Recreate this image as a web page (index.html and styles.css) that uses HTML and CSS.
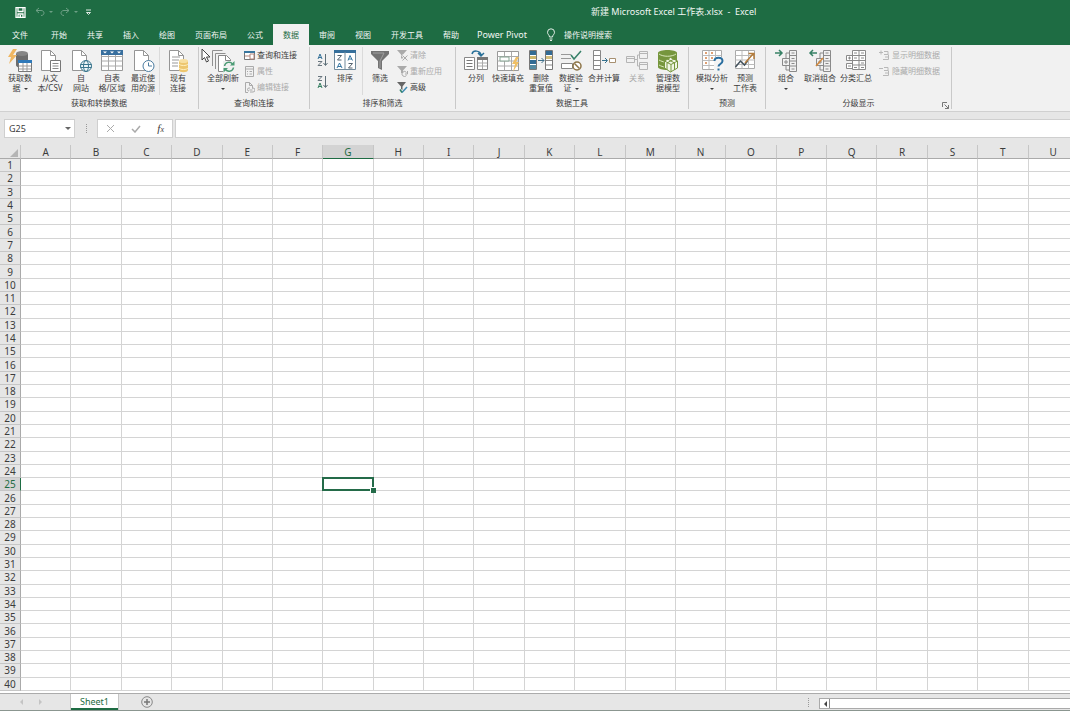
FILE: index.html
```html
<!DOCTYPE html>
<html lang="zh-CN">
<head>
<meta charset="utf-8">
<title>新建 Microsoft Excel 工作表.xlsx - Excel</title>
<link rel="stylesheet" href="styles.css">
</head>
<body>
<svg class="defs" aria-hidden="true">
  <symbol id="page" viewBox="0 0 24 24"><path d="M3.500 1.500h9l5 5v15h-14z" fill="#fff" stroke="#959595"/><path d="M12.500 1.500v5h5" fill="none" stroke="#959595"/></symbol>
  <symbol id="cells" viewBox="0 0 24 24"><path d="M1.500 2.500h21v19h-21z" fill="#fff" stroke="#999"/><path d="M1.500 7.500h21M1.500 12h21M1.500 17h21M8.500 3v18M15.500 3v18" stroke="#aaa" fill="none"/></symbol>
  <symbol id="outline" viewBox="0 0 24 24"><path d="M8.500 9.500h7v7h-7zM15.500 1.500h7v21h-7zM15.500 6.500h7M15.500 12h7M15.500 17h7M12 9V4h3M12 17v4h3M10 13h4M12 11v4M17.500 4h3M17.500 9.500h3M17.500 14.500h3M17.500 20h3" fill="none" stroke="#8a8a8a"/></symbol>
</svg>

<header class="top">
  <div class="titlebar">
    <div class="quick">
      <button class="qbtn" aria-label="保存"><svg width="11" height="11" viewBox="0 0 11 11"><path d="M1 .7h9v9.600H1zM3 .7v3.800h5V.7M3 10.300V7h5v3.300" fill="none" stroke="#fff" stroke-width="1.300"/><path d="M4.500 8h1.500v2h-1.500z" fill="#fff"/></svg></button>
      <button class="qbtn dim" aria-label="撤消"><svg width="18" height="10" viewBox="0 0 18 10"><path d="M4 1 1 3.500 4 6M1 3.500h5c4 0 4 5 0 5" fill="none" stroke="currentColor"/><path d="M14 4h4l-2 2z" fill="currentColor"/></svg></button>
      <button class="qbtn dim" aria-label="恢复"><svg width="18" height="10" viewBox="0 0 18 10"><path d="m6 1 3 2.500L6 6M9 3.500H4c-4 0-4 5 0 5" fill="none" stroke="currentColor"/><path d="M14 4h4l-2 2z" fill="currentColor"/></svg></button>
      <button class="qbtn" aria-label="自定义快速访问工具栏"><svg width="7" height="7" viewBox="0 0 7 7"><path d="M1 1h5M1.500 3.500h4l-2 2z" fill="none" stroke="#dce9e2"/></svg></button>
    </div>
    <h1 class="doc">新建 Microsoft Excel 工作表.xlsx &nbsp;-&nbsp; Excel</h1>
  </div>
  <nav class="tabs">
    <button class="tab file">文件</button>
    <button class="tab">开始</button>
    <button class="tab">共享</button>
    <button class="tab">插入</button>
    <button class="tab">绘图</button>
    <button class="tab">页面布局</button>
    <button class="tab">公式</button>
    <button class="tab active">数据</button>
    <button class="tab">审阅</button>
    <button class="tab">视图</button>
    <button class="tab">开发工具</button>
    <button class="tab">帮助</button>
    <button class="tab pivot">Power Pivot</button>
    <button class="tell"><svg width="10" height="13" viewBox="0 0 10 13"><path d="M3.500 9C3.500 7 1.500 6.500 1.500 4.300a3.500 3.500 0 0 1 7 0C8.500 6.500 6.500 7 6.500 9zM3.500 11h3M4 12.500h2" fill="none" stroke="#e4efe8"/></svg>操作说明搜索</button>
  </nav>
</header>

<section class="ribbon" aria-label="数据">
  <div class="group">
    <div class="tools g-get">
      <button class="big w30"><svg viewBox="0 0 24 24"><path d="M8 5v11c0 4 12 4 12 0V5" fill="#6d6d6d"/><ellipse cx="14" cy="4.500" rx="6" ry="2.500" fill="#858585"/><path d="M10.500 11.500h13v11h-13z" fill="#fff" stroke="#777"/><path d="M10 11h14v3H10z" fill="#2f79b9"/><path d="M11 17h12M11 20h12M15 14v8M19 14v8" stroke="#999"/><path d="M5 0 0 8h3L1 15l8-9H5l4-6z" fill="#efb661"/></svg><span>获取数<br>据<i class="caret after"></i></span></button>
      <button class="big w30"><svg viewBox="0 0 24 24"><use href="#page"/><path d="M12.500 11.500h10v11h-10z" fill="#fff" stroke="#777"/><path d="M14.500 14.500h6M14.500 17h6M14.500 19.500h6" stroke="#888"/></svg><span>从文<br>本/CSV</span></button>
      <button class="big w32"><svg viewBox="0 0 24 24"><use href="#page"/><circle cx="17" cy="17" r="5.500" fill="#edf6f9" stroke="#39758d"/><ellipse cx="17" cy="17" rx="2.500" ry="5.500" fill="none" stroke="#39758d"/><path d="M11.500 15.500h11M11.500 18.500h11" stroke="#39758d"/></svg><span>自<br>网站</span></button>
      <button class="big w30"><svg viewBox="0 0 24 24"><use href="#cells"/><path d="M1 1h22v5H1z" fill="#386f9e"/><path d="M3 2.500h4l-2 2zM10 2.500h4l-2 2zM17 2.500h4l-2 2z" fill="#fff"/></svg><span>自表<br>格/区域</span></button>
      <button class="big w32"><svg viewBox="0 0 24 24"><use href="#page"/><circle cx="17.500" cy="17" r="5.500" fill="#fff" stroke="#4b7ca0"/><path d="M17.500 13.500V17h3.500" stroke="#4b7ca0" fill="none"/></svg><span>最近使<br>用的源</span></button>
      <div class="rule"></div>
      <button class="big w36"><svg viewBox="0 0 24 24"><use href="#page"/><path d="M6 8h8M6 11h7M6 14h6M6 17h6" stroke="#999"/><path d="M13 12v9c0 3 9 3 9 0v-9" fill="#edc66e"/><ellipse cx="17.500" cy="12" rx="4.500" ry="2" fill="#f7dfa0"/><path d="M13 15c1 2 8 2 9 0M13 19c1 2 8 2 9 0" stroke="#fff0bd" fill="none"/></svg><span>现有<br>连接</span></button>
    </div>
    <h2>获取和转换数据</h2>
  </div>
  <div class="group">
    <div class="tools g-query">
      <button class="big w42"><svg viewBox="0 0 24 24"><path d="M1.500 17V1.500h10M4.500 20V4.500h10" stroke="#909090" fill="none"/><path d="M7.500 6.500h8l4 4v12h-12z" fill="#fff" stroke="#888"/><path d="M14.500 6.500v5h5" stroke="#888" fill="none"/><path d="M12 12h12v12H12z" fill="#f1f1f1"/><path d="M13.500 17a4.500 4.500 0 0 1 8-2M22.500 18.500a4.500 4.500 0 0 1-8 2" fill="none" stroke="#4b9b75" stroke-width="1.500"/><path d="M23.500 12v4.500H19zM12.500 23.500V19H17z" fill="#4b9b75"/></svg><span>全部刷新<br><i class="caret"></i></span></button>
      <div class="stack">
        <button class="small"><svg viewBox="0 0 11 11"><path d="M.5 1.500h10v8H.5z" fill="#fff" stroke="#777"/><path d="M0 1h11v2H0z" fill="#39779f"/><path d="M1 6h5M6 4h4v5H6z" stroke="#b4877d" fill="none"/></svg>查询和连接</button>
        <button class="small" disabled><svg viewBox="0 0 11 11"><path d="M1.500.500h8v10h-8zM1.500 3h8M3 5.500h1M5.500 5.500H8M3 8h1M5.500 8H8" fill="none" stroke="#aaa"/></svg>属性</button>
        <button class="small" disabled><svg viewBox="0 0 11 11"><path d="M4 10.500H1.500V.5h4l3 3v3M5.500.500v3h3M5 9a1.500 1.500 0 0 1 0-3h1M8 6h1a1.500 1.500 0 0 1 0 4H6M5.500 8h3" fill="none" stroke="#aaa"/></svg>编辑链接</button>
      </div>
    </div>
    <h2>查询和连接</h2>
  </div>
  <div class="group">
    <div class="tools g-sort">
      <div class="sorts">
        <button class="sort" aria-label="升序"><svg viewBox="0 0 11 14"><path d="M1 6 3 1l2 5M1.500 4.500h3" stroke="#37739a" fill="none"/><path d="M1 8.500h4l-4 4h4" stroke="#68757e" fill="none"/><path d="M8.500 1v11M6.500 10l2 2.500 2-2.500" stroke="#5d6e77" fill="none"/></svg></button>
        <button class="sort" aria-label="降序"><svg viewBox="0 0 11 14"><path d="M1 1.500h4l-4 4h4" stroke="#68757e" fill="none"/><path d="m1 13 2-5 2 5M1.500 11.500h3" stroke="#378063" fill="none"/><path d="M8.500 1v11M6.500 10l2 2.500 2-2.500" stroke="#5d6e77" fill="none"/></svg></button>
      </div>
      <button class="big w34"><svg viewBox="0 0 24 24"><path d="M1.500 1.500h21v19h-21z" fill="#fff" stroke="#728b9c"/><path d="M1 1h22v3H1z" fill="#366f9b"/><path d="M12 3v18" stroke="#728b9c"/><path d="M4.500 6.500h4l-4 4.500h4M15.500 14.500h4l-4 4.500h4" fill="none" stroke="#54636f"/><path d="m15 11.500 2-5 2.500 5M15.500 10H19M4 19l2.500-5L9 19M5 17.500h3" fill="none" stroke="#3676a2"/></svg><span>排序</span></button>
      <div class="rule"></div>
      <button class="big w34"><svg viewBox="0 0 24 24"><path d="M3 2h18v3l-7 7v9l-4-2v-7L3 5z" fill="#737373"/><path d="M5 4h11l-4 8v7" fill="none" stroke="#a1a1a1"/></svg><span>筛选</span></button>
      <div class="stack">
        <button class="small" disabled><svg viewBox="0 0 11 11"><path d="M0 0h10L6 4.500V10L4 8V4.500z" fill="#aaa"/><path d="m5 5 5 5.500M10 5l-5 5.500" stroke="#eee" stroke-width="2"/><path d="m5.500 5.500 5 5M10.500 5.500l-5 5" stroke="#aaa"/></svg>清除</button>
        <button class="small" disabled><svg viewBox="0 0 11 11"><path d="M0 0h10L6 4.500V7H4V4.500z" fill="#aaa"/><path d="M9.500 6.500a2.500 2.500 0 1 0 0 3M10.500 5v3H8" stroke="#aaa" fill="none"/></svg>重新应用</button>
        <button class="small"><svg viewBox="0 0 11 11"><path d="M0 0h9L5.500 4.500V8L4 7V4.500z" fill="#666"/><path d="m5 10.500 5-5.500" stroke="#3f8ab2" stroke-width="1.500"/><path d="m3 7.500 2 3" stroke="#32816b" stroke-width="1.500"/></svg>高级</button>
      </div>
    </div>
    <h2>排序和筛选</h2>
  </div>
  <div class="group">
    <div class="tools g-data">
      <button class="big w28"><svg viewBox="0 0 24 24"><path d="M.5 8.500h10v12H.5z" fill="#fff" stroke="#888"/><path d="M2.500 11.500h6M2.500 14.500h6M2.500 17.500h6" stroke="#777"/><path d="M13.500 8.500h10v12h-10z" fill="#fff" stroke="#888"/><path d="M13 8h11v3H13z" fill="#777"/><path d="M14 14h9M14 17h9M18.500 11v9" stroke="#aaa"/><path d="M8 5c1-4 8-4 9 1M14 4l3 3 3-3" stroke="#286f98" fill="none" stroke-width="1.500"/></svg><span>分列</span></button>
      <button class="big w36"><svg viewBox="0 0 24 24"><use href="#cells"/><path d="M4 8h9v4H4z" fill="#fff" stroke="#85a593"/><path d="m20 8-4 7h3l-2 8 6-10h-3l3-5z" fill="#efbf65"/></svg><span>快速填充</span></button>
      <button class="big w30"><svg viewBox="0 0 24 24"><path d="M.5 1.500h7v19h-7z" fill="#fff" stroke="#777"/><path d="M1 2h6v4H1zM1 11h6v4H1z" fill="#326b94"/><path d="M1 7h6v3H1z" fill="#cdb66c"/><path d="M1 16h6v4H1z" fill="#558ba2"/><path d="M16.500 1.500h7v19h-7z" fill="#fff" stroke="#777"/><path d="M17 2h6v4h-6z" fill="#326b94"/><path d="M17 7h6v3h-6z" fill="#d4bf7c"/><path d="M17 11.500h6M17 16h6" stroke="#888"/><path d="M9 11.500h6M12.500 9l2.500 2.500-2.500 2.500" stroke="#3e718c" fill="none"/></svg><span>删除<br>重复值</span></button>
      <button class="big w30"><svg viewBox="0 0 24 24"><path d="M2 5.500h10M2 9.500h10" stroke="#999"/><path d="M2.500 14.500h11v5h-11z" fill="#fff" stroke="#888"/><path d="m12 6 3 4 7-8" fill="none" stroke="#378169" stroke-width="1.500"/><circle cx="18" cy="17" r="4" fill="#fff" stroke="#8d7447" stroke-width="1.500"/><path d="m15.500 14.500 5 5" stroke="#8d7447" stroke-width="1.500"/></svg><span>数据验<br>证<i class="caret after"></i></span></button>
      <button class="big w36"><svg viewBox="0 0 24 24"><path d="M1.500 1.500h7v19h-7zM1.500 6.500h7M1.500 11.500h7M1.500 16.500h7" fill="#fff" stroke="#888"/><path d="M10 11.500h5M13 9l2.500 2.500L13 14" fill="none" stroke="#35708c"/><path d="M17.500 9.500h6v4h-6z" fill="#fff" stroke="#a79071"/></svg><span>合并计算</span></button>
      <button class="big w30" disabled><svg viewBox="0 0 24 24"><path d="M1.500 7.500h8v6h-8zM14.500 2.500h8v7h-8zM14.500 13.500h8v7h-8zM9.500 10.500h3V6h2M12.500 10.500V17h2M15 4.500h7M15 15.500h7M2 9.500h7" fill="none" stroke="#b5b5b5"/></svg><span>关系</span></button>
      <button class="big w32"><svg viewBox="0 0 24 24"><path d="M2 4c0-4 19-4 19 0v14c0 4-19 4-19 0z" fill="#76963d"/><path d="M3 5c4 3 13 3 17 0M3 11c2 1 4 2 6 2M3 16c2 1 4 2 6 2" stroke="#d9e8bb" fill="none"/><path d="m8.500 12 6-3.500 7 3.500v7l-7 4-6-4z" fill="#f0f6e5" stroke="#76963d"/><path d="m8.500 12 6.500 3.500 6.500-3.500M15 15.500V23M11.500 10l7 4v7M18 10l-7 4v7" stroke="#76963d" fill="none"/></svg><span>管理数<br>据模型</span></button>
    </div>
    <h2>数据工具</h2>
  </div>
  <div class="group">
    <div class="tools g-fore">
      <button class="big w36"><svg viewBox="0 0 24 24"><path d="M2.500 1.500h19v19h-19z" fill="#fff" stroke="#aaa"/><path d="M2.500 6.500h19M2.500 11.500h19M2.500 16.500h19M9 2v18M15.500 2v18" stroke="#bbb"/><path d="M5 4h2M5 9h2M5 14h2M11 4h2M11 9h2" stroke="#dfa073" stroke-width="2"/><path d="M14 8h10v14H14z" fill="#f4f4f4"/><path d="M14.500 12c0-4.500 8-4.500 8 0 0 3-4 3-4 5.500" fill="none" stroke="#2a6e9f" stroke-width="2"/><path d="M17.500 19.500h2v2h-2z" fill="#2a6e9f"/></svg><span>模拟分析<br><i class="caret"></i></span></button>
      <button class="big w30"><svg viewBox="0 0 24 24"><path d="M2.500 1.500h19v18h-19z" fill="#fff" stroke="#aaa"/><path d="M2.500 6.500h19M2.500 11h19M2.500 15.500h19M9 2v17M15.500 2v17" stroke="#bbb"/><path d="m2.500 18 5-6 4 4 3-4" stroke="#42515c" stroke-width="1.500" fill="none"/><path d="m12 14 8-9M15.500 4.500H21V10" stroke="#b47c3b" stroke-width="1.500" fill="none"/></svg><span>预测<br>工作表</span></button>
    </div>
    <h2>预测</h2>
  </div>
  <div class="group">
    <div class="tools g-outline">
      <button class="big w32"><svg viewBox="0 0 24 24"><use href="#outline"/><path d="M1 4h7M5 1l3 3-3 3" stroke="#378165" stroke-width="1.500" fill="none"/></svg><span>组合<br><i class="caret"></i></span></button>
      <button class="big w36"><svg viewBox="0 0 24 24"><use href="#outline"/><path d="M2 4h7M5 1 2 4l3 3" stroke="#378165" stroke-width="1.500" fill="none"/><path d="m8 17 7-8" stroke="#d3883b" stroke-width="1.500"/></svg><span>取消组合<br><i class="caret"></i></span></button>
      <button class="big w36"><svg viewBox="0 0 24 24"><path d="M8.500 1.500h13v19h-13zM8.500 6.500h13M8.500 11.500h13M8.500 16h13M15 1.500v19M2.500 6.500h6v5h-6zM2.500 14.500h6v5h-6zM4 9h3M5.500 7.500v3M4 17h3M10 4h3M17 4h3M17 9h3M17 14h3M17 18.500h3M10 9h3M10 18.500h3" fill="#fff" stroke="#8a8a8a"/></svg><span>分类汇总</span></button>
      <div class="stack">
        <button class="small" disabled><svg viewBox="0 0 11 11"><path d="M0 2.500h4M2 .5v4M5 1.500h4v3H5M9.500 4.500v5H4M6 7h3" fill="none" stroke="#b8b8b8"/></svg>显示明细数据</button>
        <button class="small" disabled><svg viewBox="0 0 11 11"><path d="M0 2.500h4M5 1.500h4v3H5M9.500 4.500v5H4M6 7h3" fill="none" stroke="#b8b8b8"/></svg>隐藏明细数据</button>
      </div>
    </div>
    <h2>分级显示</h2>
    <button class="launcher" aria-label="分级显示设置"><svg width="7" height="7" viewBox="0 0 7 7"><path d="M.5 5V.5H5M2.500 2.500l4 4M6.500 3v3.500H3" fill="none" stroke="#777"/></svg></button>
  </div>
  <svg class="pointer" width="10" height="15" viewBox="0 0 10 15" aria-hidden="true"><path d="M1 1v11l2.500-2.500L5.500 14l2-1-2-4H9z" fill="#fff" stroke="#444"/></svg>
</section>

<div class="formula">
  <div class="namebox">
    <input class="name" aria-label="名称框" value="G25">
    <button class="drop" aria-label="名称列表"><i class="caret"></i></button>
  </div>
  <div class="grip"></div>
  <div class="entry">
    <button aria-label="取消"><svg width="9" height="9" viewBox="0 0 9 9"><path d="m1 1 7 7M8 1 1 8" stroke="#aaa"/></svg></button>
    <button aria-label="输入"><svg width="10" height="9" viewBox="0 0 10 9"><path d="m1 5 3 3 5-6" fill="none" stroke="#aaa" stroke-width="1.500"/></svg></button>
    <button class="fx" aria-label="插入函数">f<small>x</small></button>
  </div>
  <input class="fxinput" aria-label="编辑栏">
</div>

<main class="sheet"><table id="grid"></table></main>

<footer class="bottom">
  <div class="arrows">
    <button aria-label="上一张"><svg width="4" height="6" viewBox="0 0 4 6"><path d="M4 0v6L1 3z" fill="#c4c4c4"/></svg></button>
    <button aria-label="下一张"><svg width="4" height="6" viewBox="0 0 4 6"><path d="M0 0v6l3-3z" fill="#c4c4c4"/></svg></button>
  </div>
  <button class="sheettab">Sheet1</button>
  <button class="add" aria-label="新工作表"><svg width="12" height="12" viewBox="0 0 12 12"><circle cx="6" cy="6" r="5.300" fill="none" stroke="#888"/><path d="M6 3v6M3 6h6" stroke="#777" stroke-width="1.500"/></svg></button>
  <div class="grip end"></div>
  <div class="scroll">
    <button aria-label="向左滚动"><svg width="4" height="6" viewBox="0 0 4 6"><path d="M4 0v6L1 3z" fill="#444"/></svg></button>
    <div class="thumb"></div>
  </div>
</footer>
<script src="grid.js"></script>
</body>
</html>
```
FILE: styles.css
```css
* { box-sizing: border-box; }
body {
  margin: 0;
  height: 100vh;
  display: flex;
  flex-direction: column;
  overflow: hidden;
  background: #e6e6e6;
  color: #3c3c3c;
  font: 8px/10px "Noto Sans", "Noto Sans CJK SC", sans-serif;
}
button, input {
  font: inherit;
  color: inherit;
  border: 0;
  padding: 0;
  margin: 0;
  background: none;
  border-radius: 0;
}
h1, h2 { margin: 0; font: inherit; }
svg { display: block; flex: none; }
.defs { position: absolute; width: 0; height: 0; }
.caret {
  display: inline-block;
  border: 2px solid transparent;
  border-top-color: currentColor;
  border-bottom: 0;
  vertical-align: middle;
}
.caret.after { margin-left: 3px; }

.top { background: #1e6c43; color: #f2f7f4; }
.titlebar { display: flex; height: 24px; align-items: center; }
.quick { display: flex; align-items: center; gap: 7px; padding-left: 15px; }
.qbtn { display: flex; }
.qbtn.dim { color: #6d9f85; }
.qbtn:first-child { margin-right: 2px; }
.doc {
  flex: 1;
  padding-left: 499px;
  font-size: 9px;
  line-height: 12px;
  white-space: nowrap;
}
.tabs { display: flex; height: 21px; }
.tab { padding: 0 10px; white-space: nowrap; }
.tab.file { padding: 0 13px 0 12px; }
.tab.active { background: #f1f1f1; color: #1e6c43; }
.tab.pivot { font-size: 9px; padding: 0 8px; }
.tell { display: flex; align-items: center; gap: 8px; padding-left: 11px; }

.ribbon {
  display: flex;
  position: relative;
  height: 67px;
  background: #f1f1f1;
  border-bottom: 1px solid #d0d0d0;
}
.group {
  display: flex;
  flex-direction: column;
  justify-content: space-between;
  position: relative;
  margin: 2px 0;
  border-right: 1px solid #c9c9c9;
}
.group h2 { text-align: center; line-height: 12px; }
.tools { display: flex; height: 50px; }
.g-get { padding: 0 2px 0 5px; }
.g-query { padding: 0 12px 0 3px; }
.g-sort { padding: 0 13px 0 7px; }
.g-data { padding: 0 4px 0 6px; }
.g-fore { padding: 0 5px; }
.g-outline { padding: 0 11px 0 4px; }
.g-outline .stack { margin-left: 5px; }
.big {
  display: flex;
  flex-direction: column;
  align-items: center;
  padding-top: 2px;
  white-space: nowrap;
}
.big svg { width: 24px; height: 24px; }
.big span { text-align: center; }
.big:disabled, .small:disabled { color: #aaa; }
.w28 { width: 28px; }
.w30 { width: 30px; }
.w32 { width: 32px; }
.w34 { width: 34px; }
.w36 { width: 36px; }
.w42 { width: 42px; }
.rule { width: 1px; height: 48px; background: #dadada; }
.stack { display: flex; flex-direction: column; }
.small {
  display: flex;
  align-items: center;
  gap: 2px;
  height: 16px;
  white-space: nowrap;
}
.small svg { width: 11px; height: 11px; }
.sorts { display: flex; flex-direction: column; gap: 8px; padding-top: 6px; }
.sort svg { width: 11px; height: 14px; }
.launcher { position: absolute; right: 2px; bottom: 0; }
.pointer { position: absolute; left: 201px; top: 3px; }

.formula { display: flex; height: 33px; padding: 7px 0 7px 4px; }
.namebox {
  display: flex;
  align-items: center;
  width: 71px;
  background: #fff;
  border: 1px solid #cfcfcf;
}
.name { flex: 1; min-width: 0; padding-left: 4px; font-size: 9px; }
.drop { width: 13px; color: #666; }
.drop .caret { display: block; width: 0; border-width: 3px 3px 0; margin: auto; }
.grip { width: 22px; display: grid; place-items: center; }
.grip::before { content: ""; height: 9px; border-left: 1px dotted #999; }
.entry {
  display: flex;
  align-items: center;
  justify-content: space-around;
  width: 76px;
  margin-right: 2px;
  background: #fff;
  border: 1px solid #cfcfcf;
}
.fx { font: italic 11px/12px "Liberation Serif", serif; }
.fx small { font-size: 8px; }
.fxinput {
  flex: 1;
  min-width: 0;
  padding: 0 4px;
  background: #fff;
  border: 1px solid #cfcfcf;
  border-right: 0;
}

.sheet { flex: 1; min-height: 0; overflow: hidden; background: #fff; }
#grid {
  width: calc(100% + 9px);
  height: calc(100% - 2px);
  table-layout: fixed;
  border-collapse: separate;
  border-spacing: 0;
  font-size: 10px;
  line-height: 12px;
}
#grid th, #grid td { padding: 0; font-weight: normal; }
#grid td { border: solid #d4d4d4; border-width: 0 1px 1px 0; }
#grid th { background: #e6e6e6; border: solid #c6c6c6; border-width: 0 1px 1px 0; }
#grid thead th { height: 14px; border-bottom-color: #aaa; }
#grid tbody th { border-right-color: #aaa; }
#grid .corner { width: 21px; }
.corner svg { margin: 2px 2px 0 auto; }
#grid th.on { background: #d3d3d3; color: #1e6c43; }
#grid thead th.on { border-bottom-color: #1e6c43; }
#grid tbody th.on { border-right-color: #1e6c43; }
#grid td.cursor { position: relative; }
.cursor::before {
  content: "";
  position: absolute;
  inset: -1px;
  border: 2px solid #246b49;
}
.cursor::after {
  content: "";
  position: absolute;
  right: -3px;
  bottom: -3px;
  width: 5px;
  height: 5px;
  background: #246b49;
  border: solid #fff;
  border-width: 1px 0 0 1px;
}

.bottom {
  display: flex;
  height: 18px;
  border-top: 1px solid #ababab;
  border-bottom: 1px solid #8b9690;
}
.arrows { display: flex; justify-content: center; gap: 16px; width: 70px; padding-right: 8px; }
.sheettab {
  width: 49px;
  background: #fff;
  color: #1e6c43;
  font-size: 9px;
  border: solid #c6c6c6;
  border-width: 0 1px;
  box-shadow: inset 0 -2px #1e6c43;
}
.add { padding-left: 22px; }
.grip.end { margin-left: auto; }
.scroll { display: flex; width: 251px; margin: 4px 0 1px; border: 1px solid #aaa; border-right: 0; background: #fff; }
.scroll button { display: grid; place-items: center; width: 10px; border-right: 1px solid #888; }
.thumb { flex: 1; background: #fff; }
```
FILE: grid.js
```js
const letters = "ABCDEFGHIJKLMNOPQRSTU".split("");
const rowCount = 40;
const active = { col: "G", row: 25 };

const head = letters
  .map(c => `<th scope="col"${c === active.col ? ' class="on"' : ""}>${c}</th>`)
  .join("");

let body = "";
for (let r = 1; r <= rowCount; r++) {
  const on = r === active.row;
  const cells = letters
    .map(c => `<td${on && c === active.col ? ' class="cursor"' : ""}></td>`)
    .join("");
  body += `<tr><th scope="row"${on ? ' class="on"' : ""}>${r}</th>${cells}</tr>`;
}

document.getElementById("grid").innerHTML =
  `<thead><tr><th class="corner"><svg width="8" height="8" viewBox="0 0 8 8"><path d="M8 0v8H0z" fill="#b5b5b5"/></svg></th>${head}</tr></thead><tbody>${body}</tbody>`;
```
